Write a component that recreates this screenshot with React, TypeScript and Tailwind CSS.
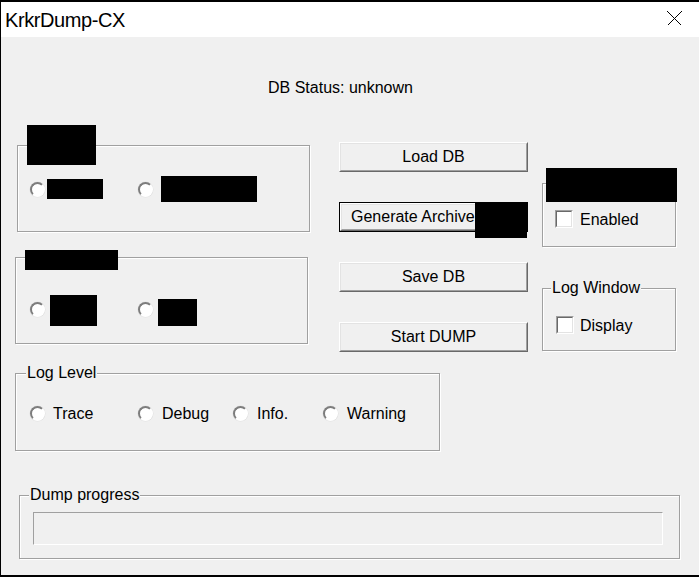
import React from "react";

function Group({
  className,
  label,
  children,
}: {
  className: string;
  label?: React.ReactNode;
  children?: React.ReactNode;
}) {
  return (
    <div
      className={
        "relative border border-[#a0a0a0] shadow-[1px_1px_0_#ffffff,inset_1px_1px_0_#ffffff] " +
        className
      }
    >
      {label}
      {children}
    </div>
  );
}

function Radio({ className = "" }: { className?: string }) {
  return (
    <div
      className={
        "w-[15px] h-[15px] shrink-0 rounded-full border-2 border-t-[#7d7d7d] border-l-[#7d7d7d] border-b-[#ffffff] border-r-[#ffffff] bg-white shadow-[0_0_0_0.5px_#e0e0e0] " +
        className
      }
    />
  );
}

function Check({ className = "" }: { className?: string }) {
  return (
    <div
      className={
        "w-[18px] h-[18px] shrink-0 border border-t-[#a0a0a0] border-l-[#a0a0a0] border-b-white border-r-white " +
        className
      }
    >
      <div className="w-full h-full border border-t-[#696969] border-l-[#696969] border-b-[#e3e3e3] border-r-[#e3e3e3] bg-white" />
    </div>
  );
}

function Button({ children }: { children: React.ReactNode }) {
  return (
    <div className="h-[30px] border border-t-white border-l-white border-b-[#696969] border-r-[#696969]">
      <div className="h-full border border-t-[#e3e3e3] border-l-[#e3e3e3] border-b-[#a0a0a0] border-r-[#a0a0a0] bg-[#f0f0f0] flex items-center justify-center leading-[20px]">
        {children}
      </div>
    </div>
  );
}

function TextLabel({ left, text }: { left: string; text: string }) {
  return (
    <div
      className={
        "absolute top-[-11px] bg-[#f0f0f0] px-[1px] leading-[20px] whitespace-nowrap " +
        left
      }
    >
      {text}
    </div>
  );
}

export default function App() {
  return (
    <div className="w-[699px] h-[577px] flex flex-col bg-[#f0f0f0] border-t-2 border-l border-b-2 border-black overflow-hidden font-['Liberation_Sans',Arial,sans-serif] text-[16px] text-black">
      {/* Title bar */}
      <div className="h-[35px] shrink-0 bg-white flex items-start justify-between pl-[4px] pr-[17px]">
        <div className="pt-[8px] text-[20px] leading-[20px] tracking-[-0.4px]">
          KrkrDump-CX
        </div>
        <svg
          width="15"
          height="15"
          viewBox="0 0 15 15"
          className="mt-[9px]"
          shapeRendering="crispEdges"
        >
          <path d="M0.5 0.5 L14.5 14.5 M14.5 0.5 L0.5 14.5" stroke="#000" strokeWidth="1" fill="none" />
        </svg>
      </div>

      {/* Content */}
      <div className="flex-1 flex flex-col">
        <div className="mt-[41px] pl-[267px] h-[20px] leading-[20px]">DB Status: unknown</div>

        <div className="mt-[44px] flex items-start pl-[14px]">
          {/* Left column */}
          <div className="w-[295px] flex flex-col">
            <Group
              className="ml-[2px] mt-[3px] w-[293px] h-[87px]"
              label={<div className="absolute left-[9px] top-[-21px] w-[69px] h-[40px] bg-black" />}
            >
              <div className="mt-[30px] h-[26px] flex items-center">
                <Radio className="ml-[12px]" />
                <div className="ml-[2px] w-[56px] h-[20px] bg-black" />
                <Radio className="ml-[35px]" />
                <div className="ml-[8px] w-[96px] h-[26px] bg-black" />
              </div>
            </Group>
            <Group
              className="mt-[25px] w-[293px] h-[87px]"
              label={<div className="absolute left-[9px] top-[-8px] w-[93px] h-[20px] bg-black" />}
            >
              <div className="mt-[37px] flex items-start">
                <Radio className="ml-[14px] mt-[7px]" />
                <div className="ml-[5px] w-[47px] h-[31px] bg-black" />
                <Radio className="ml-[41px] mt-[7px]" />
                <div className="ml-[5px] mt-[4px] w-[39px] h-[27px] bg-black" />
              </div>
            </Group>
          </div>

          {/* Middle column: buttons */}
          <div className="ml-[29px] w-[189px] flex flex-col gap-[30px]">
            <Button>Load DB</Button>
            <div className="relative h-[30px] border border-black">
              <div className="h-full border border-t-white border-l-white border-b-[#696969] border-r-[#696969]">
                <div className="h-full border border-t-[#e3e3e3] border-l-[#e3e3e3] border-b-[#a0a0a0] border-r-[#a0a0a0] bg-[#f0f0f0] flex items-center pl-[9px] leading-[20px] whitespace-nowrap">
                  Generate Archive
                </div>
              </div>
              <div className="absolute left-[135px] top-0 w-[52px] h-[35px] bg-black" />
            </div>
            <Button>Save DB</Button>
            <Button>Start DUMP</Button>
          </div>

          {/* Right column */}
          <div className="ml-[14px] w-[134px] flex flex-col">
            <Group
              className="mt-[41px] h-[64px]"
              label={<div className="absolute left-[3px] top-[-16px] w-[131px] h-[34px] bg-black" />}
            >
              <div className="mt-[26px] ml-[12px] flex items-center h-[18px]">
                <Check />
                <span className="ml-[7px] pt-[2px] leading-[20px]">Enabled</span>
              </div>
            </Group>
            <Group className="mt-[41px] h-[63px]" label={<TextLabel left="left-[8px]" text="Log Window" />}>
              <div className="mt-[27px] ml-[13px] flex items-center h-[18px]">
                <Check />
                <span className="ml-[6px] pt-[2px] leading-[20px]">Display</span>
              </div>
            </Group>
          </div>
        </div>

        {/* Log Level */}
        <Group className="mt-[21px] ml-[14px] w-[425px] h-[78px]" label={<TextLabel left="left-[10px]" text="Log Level" />}>
          <div className="mt-[29px] h-[20px] flex items-center pl-[14px]">
            <div className="w-[108px] flex items-center">
              <Radio />
              <span className="ml-[8px] pt-[2px] leading-[20px]">Trace</span>
            </div>
            <div className="w-[95px] flex items-center">
              <Radio />
              <span className="ml-[9px] pt-[2px] leading-[20px]">Debug</span>
            </div>
            <div className="w-[90px] flex items-center">
              <Radio />
              <span className="ml-[9px] pt-[2px] leading-[20px]">Info.</span>
            </div>
            <div className="flex items-center">
              <Radio />
              <span className="ml-[9px] pt-[2px] leading-[20px]">Warning</span>
            </div>
          </div>
        </Group>

        {/* Dump progress */}
        <Group className="mt-[44px] ml-[18px] w-[661px] h-[64px]" label={<TextLabel left="left-[9px]" text="Dump progress" />}>
          <div className="ml-[13px] mt-[16px] w-[630px] h-[33px] border border-t-[#a0a0a0] border-l-[#a0a0a0] border-b-white border-r-white" />
        </Group>
      </div>
    </div>
  );
}
